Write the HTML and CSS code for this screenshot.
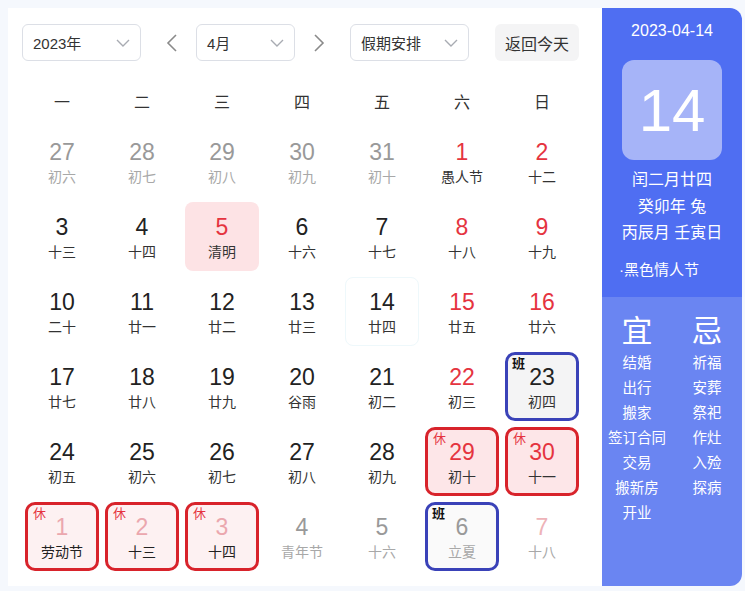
FILE: index.html
```html
<!DOCTYPE html>
<html lang="zh">
<head>
<meta charset="utf-8">
<link rel="stylesheet" href="styles.css">
</head>
<body>
<div class="app">
  <div class="main">
    <div class="toolbar">
      <div class="select w119"><span>2023年</span><svg class="chev" width="14" height="8" viewBox="0 0 14 8"><polyline points="1,1 7,7 13,1" fill="none" stroke="#a8abb2" stroke-width="1.4"/></svg></div>
      <div class="nav prev"><svg width="12" height="20" viewBox="0 0 12 20"><polyline points="10,2 2,10 10,18" fill="none" stroke="#8a8a8a" stroke-width="1.6"/></svg></div>
      <div class="select w99"><span>4月</span><svg class="chev" width="14" height="8" viewBox="0 0 14 8"><polyline points="1,1 7,7 13,1" fill="none" stroke="#a8abb2" stroke-width="1.4"/></svg></div>
      <div class="nav next-btn"><svg width="12" height="20" viewBox="0 0 12 20"><polyline points="2,2 10,10 2,18" fill="none" stroke="#8a8a8a" stroke-width="1.6"/></svg></div>
      <div class="select w119"><span>假期安排</span><svg class="chev" width="14" height="8" viewBox="0 0 14 8"><polyline points="1,1 7,7 13,1" fill="none" stroke="#a8abb2" stroke-width="1.4"/></svg></div>
      <div class="today-btn">返回今天</div>
    </div>
    <div class="weekdays">
      <div>一</div><div>二</div><div>三</div><div>四</div><div>五</div><div>六</div><div>日</div>
    </div>
    <div class="grid">
      <div class="cell other"><div class="num">27</div><div class="lunar">初六</div></div>
      <div class="cell other"><div class="num">28</div><div class="lunar">初七</div></div>
      <div class="cell other"><div class="num">29</div><div class="lunar">初八</div></div>
      <div class="cell other"><div class="num">30</div><div class="lunar">初九</div></div>
      <div class="cell other"><div class="num">31</div><div class="lunar">初十</div></div>
      <div class="cell wk"><div class="num">1</div><div class="lunar">愚人节</div></div>
      <div class="cell wk"><div class="num">2</div><div class="lunar">十二</div></div>

      <div class="cell"><div class="num">3</div><div class="lunar">十三</div></div>
      <div class="cell"><div class="num">4</div><div class="lunar">十四</div></div>
      <div class="cell fest"><div class="num">5</div><div class="lunar">清明</div></div>
      <div class="cell"><div class="num">6</div><div class="lunar">十六</div></div>
      <div class="cell"><div class="num">7</div><div class="lunar">十七</div></div>
      <div class="cell wk"><div class="num">8</div><div class="lunar">十八</div></div>
      <div class="cell wk"><div class="num">9</div><div class="lunar">十九</div></div>

      <div class="cell"><div class="num">10</div><div class="lunar">二十</div></div>
      <div class="cell"><div class="num">11</div><div class="lunar">廿一</div></div>
      <div class="cell"><div class="num">12</div><div class="lunar">廿二</div></div>
      <div class="cell"><div class="num">13</div><div class="lunar">廿三</div></div>
      <div class="cell today"><div class="num">14</div><div class="lunar">廿四</div></div>
      <div class="cell wk"><div class="num">15</div><div class="lunar">廿五</div></div>
      <div class="cell wk"><div class="num">16</div><div class="lunar">廿六</div></div>

      <div class="cell"><div class="num">17</div><div class="lunar">廿七</div></div>
      <div class="cell"><div class="num">18</div><div class="lunar">廿八</div></div>
      <div class="cell"><div class="num">19</div><div class="lunar">廿九</div></div>
      <div class="cell"><div class="num">20</div><div class="lunar">谷雨</div></div>
      <div class="cell"><div class="num">21</div><div class="lunar">初二</div></div>
      <div class="cell wk"><div class="num">22</div><div class="lunar">初三</div></div>
      <div class="cell work"><span class="tag ban">班</span><div class="num">23</div><div class="lunar">初四</div></div>

      <div class="cell"><div class="num">24</div><div class="lunar">初五</div></div>
      <div class="cell"><div class="num">25</div><div class="lunar">初六</div></div>
      <div class="cell"><div class="num">26</div><div class="lunar">初七</div></div>
      <div class="cell"><div class="num">27</div><div class="lunar">初八</div></div>
      <div class="cell"><div class="num">28</div><div class="lunar">初九</div></div>
      <div class="cell rest"><span class="tag xiu">休</span><div class="num">29</div><div class="lunar">初十</div></div>
      <div class="cell rest"><span class="tag xiu">休</span><div class="num">30</div><div class="lunar">十一</div></div>

      <div class="cell rest next"><span class="tag xiu">休</span><div class="num">1</div><div class="lunar">劳动节</div></div>
      <div class="cell rest next"><span class="tag xiu">休</span><div class="num">2</div><div class="lunar">十三</div></div>
      <div class="cell rest next"><span class="tag xiu">休</span><div class="num">3</div><div class="lunar">十四</div></div>
      <div class="cell other"><div class="num">4</div><div class="lunar">青年节</div></div>
      <div class="cell other"><div class="num">5</div><div class="lunar">十六</div></div>
      <div class="cell work other"><span class="tag ban">班</span><div class="num">6</div><div class="lunar">立夏</div></div>
      <div class="cell other wkfade"><div class="num">7</div><div class="lunar">十八</div></div>
    </div>
  </div>
  <div class="side">
    <div class="side-top">
      <div class="date">2023-04-14</div>
      <div class="bigday">14</div>
      <div class="ganzhi">
        <div>闰二月廿四</div>
        <div>癸卯年 兔</div>
        <div>丙辰月 壬寅日</div>
      </div>
      <div class="fest-list">·黑色情人节</div>
    </div>
    <div class="side-bottom">
      <div class="col">
        <div class="big">宜</div>
        <div>结婚</div><div>出行</div><div>搬家</div><div>签订合同</div><div>交易</div><div>搬新房</div><div>开业</div>
      </div>
      <div class="col">
        <div class="big">忌</div>
        <div>祈福</div><div>安葬</div><div>祭祀</div><div>作灶</div><div>入殓</div><div>探病</div>
      </div>
    </div>
  </div>
</div>
</body>
</html>
```

FILE: styles.css
```css
* { box-sizing: border-box; }
html, body { margin: 0; padding: 0; }
body {
  background: #f5f8fd;
  font-family: "Liberation Sans", "Noto Sans CJK SC", sans-serif;
  width: 745px;
  height: 591px;
  overflow: hidden;
}
.app {
  margin: 8px 0 0 8px;
  width: 734px;
  height: 578px;
  display: flex;
  background: #fff;
  border-radius: 0 12px 12px 0;
}
.main {
  width: 594px;
  padding: 16px 0 0 14px;
}
.toolbar {
  display: flex;
  align-items: center;
  height: 37px;
}
.select {
  height: 37px;
  border: 1px solid #dcdfe6;
  border-radius: 6px;
  display: flex;
  align-items: center;
  justify-content: space-between;
  padding: 0 10px 0 10px;
  font-size: 15px;
  color: #333;
}
.w119 { width: 119px; }
.w99 { width: 99px; }
.nav {
  width: 55px;
  display: flex;
  justify-content: center;
  align-items: center;
}
.nav.prev { padding-left: 6px; }
.nav.next-btn { padding-right: 8px; }
.today-btn {
  margin-left: 26px;
  width: 84px;
  height: 37px;
  background: #f4f4f5;
  border-radius: 6px;
  display: flex;
  align-items: center;
  justify-content: center;
  font-size: 16px;
  color: #333;
}
.weekdays {
  margin-top: 20px;
  display: grid;
  grid-template-columns: repeat(7, 80px);
  height: 40px;
  align-items: center;
  font-size: 16px;
  color: #333;
  text-align: center;
}
.grid {
  margin-top: 3px;
  display: grid;
  grid-template-columns: repeat(7, 80px);
  grid-auto-rows: 75px;
}
.cell {
  position: relative;
  margin: 3px;
  border-radius: 8px;
  text-align: center;
  color: #222;
}
.num {
  font-size: 23px;
  line-height: 26px;
  margin-top: 12px;
}
.lunar {
  font-size: 14px;
  line-height: 20px;
  margin-top: 2px;
  color: #333;
}
.other .num { color: #999; }
.other .lunar { color: #a8a8a8; }
.wk .num { color: #e5343f; }
.wkfade .num { color: #eeb3b8; }
.fest { background: #fde3e5; }
.fest .num { color: #e5343f; }
.today { border: 1px solid #eef8fb; }
.today .num { margin-top: 11px; }
.rest {
  background: #fde6e8;
  border: 3px solid #d8232b;
  border-radius: 10px;
}
.rest .num { color: #e5343f; margin-top: 9px; }
.rest.next { background: #fdf1f2; }
.rest.next .num { color: #eba7ae; }
.rest.next .lunar { color: #222; }
.work {
  background: #f4f4f5;
  border: 3px solid #3a42b8;
  border-radius: 10px;
}
.work.other { background: #fafafa; }
.work .num { margin-top: 9px; }
.tag {
  position: absolute;
  left: 5px;
  top: 1px;
  font-size: 13px;
  line-height: 16px;
}
.xiu { color: #e5343f; }
.ban { color: #111; font-weight: bold; font-family: "Noto Sans CJK SC", serif; left: 4px; top: 0; }

.side {
  width: 140px;
  height: 578px;
  display: flex;
  flex-direction: column;
  border-radius: 0 12px 12px 0;
  overflow: hidden;
  color: #fff;
}
.side-top {
  background: #4f6ef2;
  height: 289px;
  padding-top: 13px;
  display: flex;
  flex-direction: column;
  align-items: center;
}
.date { font-size: 16px; line-height: 20px; }
.bigday {
  margin-top: 19px;
  width: 100px;
  height: 100px;
  border-radius: 12px;
  background: #a6b4f8;
  font-size: 60px;
  display: flex;
  align-items: center;
  justify-content: center;
}
.ganzhi {
  margin-top: 7px;
  font-size: 16px;
  line-height: 26.5px;
  text-align: center;
}
.fest-list {
  align-self: flex-start;
  margin: 13px 0 0 17px;
  font-size: 15px;
  line-height: 20px;
}
.side-bottom {
  flex: 1;
  background: #6a85f2;
  display: flex;
  padding-top: 16px;
}
.col {
  width: 70px;
  text-align: center;
  font-size: 14.5px;
  line-height: 25px;
}
.col .big {
  font-size: 31px;
  line-height: 38px;
}
```
